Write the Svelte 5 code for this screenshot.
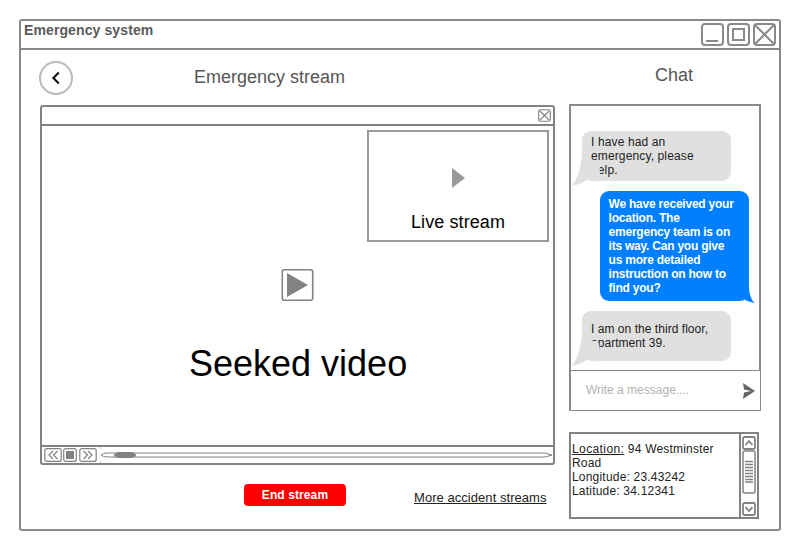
<script>
  const incomingTail = 'M11 0 C11 26 8 46 0 54.5 C7 54 12 51 16 48 C19 50 24 51 29 50 L28 42 Q28 30 24 30 L11 30 Z';
</script>

<div class="window">
  <header class="titlebar">
    <span class="title">Emergency system</span>
    <div class="buttons">
      <svg width="23" height="23" viewBox="0 0 23 23"><rect x="1" y="1" width="21" height="21" rx="3" /><path d="M5 18H17" /></svg>
      <svg width="23" height="23" viewBox="0 0 23 23"><rect x="1" y="1" width="21" height="21" rx="3" /><rect x="6" y="6" width="11" height="11" /></svg>
      <svg width="23" height="23" viewBox="0 0 23 23"><rect x="1" y="1" width="21" height="21" rx="3" /><path d="M2 2L21 21M21 2L2 21" /></svg>
    </div>
  </header>

  <main>
    <section class="left">
      <div class="heading">
        <button class="back" aria-label="Back">
          <svg width="34" height="34" viewBox="0 0 34 34"><circle cx="17" cy="17" r="16" fill="#fff" stroke="#bbb" stroke-width="2" /><path d="M19.8 11.6L14.4 17L19.8 22.4" fill="none" stroke="#111" stroke-width="2.1" /></svg>
        </button>
        <h2>Emergency stream</h2>
      </div>

      <div class="player">
        <div class="playerbar">
          <svg width="13" height="13" viewBox="0 0 13 13"><rect x=".75" y=".75" width="11.5" height="11.5" rx="1.5" /><path d="M2 2L11 11M11 2L2 11" /></svg>
        </div>
        <div class="screen">
          <svg class="play" width="33" height="33" viewBox="0 0 33 33"><rect x="1.3" y="1.8" width="30.4" height="30.4" rx="2" fill="none" stroke="#828282" stroke-width="1.6" /><path d="M6 5V29L27 17Z" fill="#828282" /></svg>
          <div class="seeked">Seeked video</div>
          <div class="live">
            <svg width="13" height="20" viewBox="0 0 13 20"><path d="M0 0V20L13 10Z" fill="#999" /></svg>
            <span>Live stream</span>
          </div>
        </div>
        <div class="controls">
          <svg width="18" height="14" viewBox="0 0 18 14"><rect x=".8" y=".6" width="16.4" height="12.8" rx="2" /><path d="M9 3L5 7L9 11M13.5 3L9.5 7L13.5 11" /></svg>
          <svg width="14" height="14" viewBox="0 0 14 14"><rect x=".7" y=".7" width="12.6" height="12.6" rx="2" /><rect x="3" y="3" width="8" height="8" fill="#828282" stroke="none" /></svg>
          <svg width="18" height="14" viewBox="0 0 18 14"><rect x=".8" y=".6" width="16.4" height="12.8" rx="2" /><path d="M4.5 3L8.5 7L4.5 11M9 3L13 7L9 11" /></svg>
          <svg class="track" width="453" height="16" viewBox="0 0 453 16"><path d="M.5 0V2M.5 14V16" stroke="#bbb" stroke-width=".7" /><path d="M1 8Q3 6 8 6H445L452 8L445 10H8Q3 10 1 8Z" /><rect x="14" y="5" width="22" height="6" rx="6" ry="3" fill="#828282" stroke="none" /></svg>
        </div>
      </div>

      <div class="actions">
        <button class="end">End stream</button>
        <a href="#streams">More accident streams</a>
      </div>
    </section>

    <section class="right">
      <h2>Chat</h2>
      <div class="chat">
        <div class="messages">
          <div class="bubble in first">I have had an emergency, please help.
            <svg width="29" height="56" viewBox="0 0 29 56"><path d={incomingTail} fill="#e0e0e0" /></svg>
          </div>
          <div class="bubble out">We have received your location. The emergency team is on its way. Can you give us more detailed instruction on how to find you?
            <svg width="12" height="18" viewBox="0 0 12 18"><path d="M6 0C6 9 8 15 12 18Q6 17 2 15L0 10Z" fill="#0080ff" /></svg>
          </div>
          <div class="bubble in last">I am on the third floor, apartment 39.
            <svg width="29" height="56" viewBox="0 0 29 56"><path d={incomingTail} fill="#e0e0e0" /></svg>
          </div>
        </div>
        <div class="compose">
          <span>Write a message....</span>
          <svg width="13" height="16" viewBox="0 0 13 16"><path d="M0 0L12 8L0 16L1 9.6L8 8L1 6.4Z" fill="#666" /></svg>
        </div>
      </div>

      <div class="location">
        <div class="details">
          <div class="address"><u>Location:</u> 94 Westminster Road</div>
          <div>Longitude: 23.43242</div>
          <div>Latitude: 34.12341</div>
        </div>
        <div class="scroll">
          <svg width="14" height="14" viewBox="0 0 14 14"><rect x="1" y="1" width="12" height="12" rx="1.5" /><path d="M3.5 9L7 5.2L10.5 9" /></svg>
          <svg class="thumb" width="14" height="44" viewBox="0 0 14 44"><rect x="1" y="1" width="12" height="42" rx="1.5" /><path d="M3 11.5H11M3 14.5H11M3 17.5H11M3 20.5H11M3 23.5H11M3 26.5H11M3 29.5H11M3 32H11" /></svg>
          <svg class="down" width="14" height="14" viewBox="0 0 14 14"><rect x="1" y="1" width="12" height="12" rx="1.5" /><path d="M3.5 5.2L7 9L10.5 5.2" /></svg>
        </div>
      </div>
    </section>
  </main>
</div>

<style>
  :global(body) { background: #fff; }
  * { box-sizing: border-box; }
  .window { width: 762px; height: 512px; margin: 19px; border: 2px solid #8a8a8a; border-radius: 3px; font: 12px/14px "Liberation Sans", Arial, sans-serif; color: #222; overflow: hidden; }
  svg { display: block; flex: none; }
  button { border: 0; padding: 0; background: none; font: inherit; }
  h2 { margin: 0; font-size: 18px; line-height: 22px; font-weight: 400; color: #555; }
  .titlebar { height: 29px; border-bottom: 2px solid #8a8a8a; display: flex; justify-content: space-between; padding: 2px 3px 0; }
  .title { font-size: 14px; line-height: 14px; font-weight: 700; color: #5a5a5a; letter-spacing: .11px; }
  .buttons { display: flex; gap: 3px; }
  .buttons svg { fill: none; stroke: #8a8a8a; stroke-width: 2; }
  main { display: flex; gap: 14px; padding-left: 19px; }
  .left { width: 515px; }
  .heading { height: 55px; display: flex; align-items: flex-start; padding-top: 11px; gap: 121px; }
  .heading h2 { margin-top: 5px; }
  .back { margin-left: -1px; }
  .player { height: 360px; border: 2px solid #828282; border-radius: 3px; }
  .playerbar { height: 19px; border-bottom: 2px solid #828282; display: flex; justify-content: flex-end; padding: 2px 2px 0; }
  .playerbar svg, .controls svg { fill: none; stroke: #828282; stroke-width: 1.2; }
  .screen { height: 319px; position: relative; padding-top: 142px; }
  .play { margin-left: 239px; }
  .seeked { margin: 42px 0 0 147px; font-size: 36px; line-height: 42px; color: #000; white-space: nowrap; }
  .live { position: absolute; left: 325px; top: 4px; width: 182px; height: 112px; border: 2px solid #999; display: flex; flex-direction: column; align-items: center; padding-top: 36px; font-size: 18px; line-height: 22px; color: #000; }
  .live span { margin-top: 23px; letter-spacing: .1px; }
  .controls { height: 18px; border-top: 2px solid #828282; display: flex; align-items: center; gap: 0; padding-left: 2px; }
  .controls svg + svg { margin-left: 1px; }
  .controls svg:nth-child(3) { margin-left: 2px; }
  .controls .track { margin-left: 3px; stroke-width: 1; }
  .actions { height: 60px; display: flex; align-items: flex-start; padding: 19px 0 0 204px; }
  .end { width: 102px; height: 22px; border-radius: 4px; background: #f00; color: #fff; font-weight: 700; letter-spacing: .1px; }
  .actions a { margin: 7px 0 0 68px; color: #222; font-size: 13px; line-height: 14px; letter-spacing: .05px; white-space: nowrap; }
  .right { width: 192px; }
  .right h2 { height: 54px; padding: 14px 0 0 86px; }
  .chat { height: 307px; }
  .messages { height: 266px; border: 2px solid #8a8a8a; border-bottom: 0; padding: 25px 0 0 11px; display: flex; flex-direction: column; gap: 10px; }
  .bubble { position: relative; width: 149px; border-radius: 9px; }
  .in { height: 50px; background: #e0e0e0; padding: 4px 19px 0 9px; letter-spacing: .13px; }
  .last { padding-top: 11px; letter-spacing: .04px; }
  .in svg { position: absolute; left: -10px; top: 0; }
  .out { height: 110px; margin-left: 17.6px; background: #0080ff; color: #fff; font-weight: 700; padding: 6px 12px 0 9px; letter-spacing: -.23px; }
  .out svg { position: absolute; left: 143px; top: 94px; }
  .compose { height: 41px; border: 1px solid #8a8a8a; border-left-width: 2px; display: flex; align-items: center; justify-content: space-between; padding: 0 4px 0 15px; color: #b3b3b3; }
  .compose span { margin-bottom: 2px; }
  .location { margin-top: 21px; width: 190px; height: 87px; border: 2px solid #828282; display: flex; }
  .details { width: 168px; padding: 8px 0 0 1px; letter-spacing: .2px; }
  .address { width: 150px; }
  .address u { letter-spacing: .4px; }
  .scroll { width: 18px; border-left: 2px solid #828282; padding: 2px 1px 0; }
  .scroll svg { fill: none; stroke: #828282; stroke-width: 1.8; }
  .scroll .thumb { stroke-width: 1.5; }
  .scroll .down { margin-top: 8px; }
</style>
